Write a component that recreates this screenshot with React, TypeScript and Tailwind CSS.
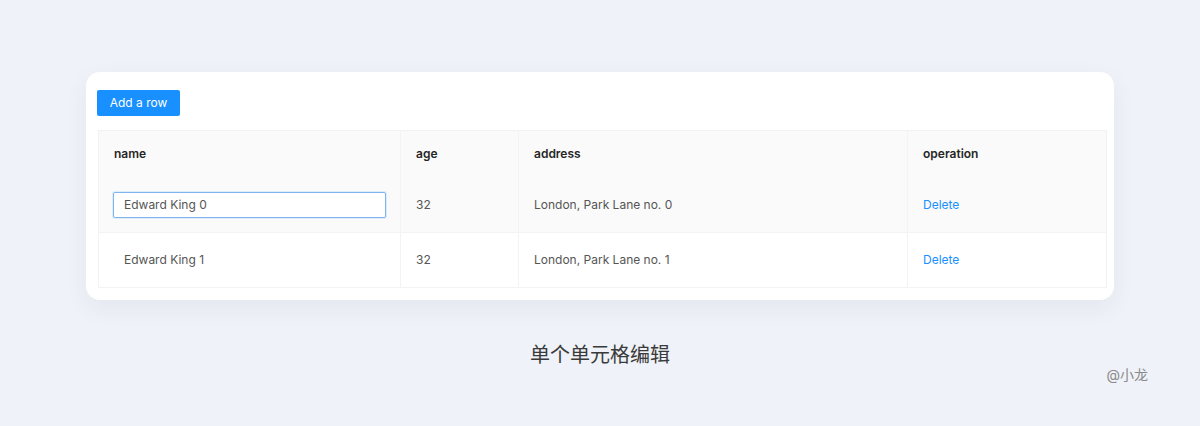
import React from 'react';

interface Row {
  key: string;
  name: string;
  age: number;
  address: string;
}

const rows: Row[] = [
  { key: '0', name: 'Edward King 0', age: 32, address: 'London, Park Lane no. 0' },
  { key: '1', name: 'Edward King 1', age: 32, address: 'London, Park Lane no. 1' },
];

export default function App() {
  return (
    <div
      className="w-[1200px] h-[426px] bg-[#eff2f8] flex flex-col items-center pt-[72px]"
      style={{ fontFamily: 'Inter, "Noto Sans CJK SC", sans-serif' }}
    >
      <div className="w-[1028px] h-[228px] bg-white rounded-[14px] shadow-[0_8px_24px_rgba(30,45,80,0.06)] pt-[17px] px-[11px]">
        <button className="h-[26px] w-[83px] bg-[#1890ff] text-white text-[12px] rounded-[2px]">
          Add a row
        </button>
        <table className="mt-[14px] ml-px w-[1008px] border-collapse border border-[#f2f2f2] text-[12px] table-fixed">
          <colgroup>
            <col className="w-[302px]" />
            <col className="w-[118px]" />
            <col className="w-[389px]" />
            <col className="w-[199px]" />
          </colgroup>
          <thead>
            <tr className="bg-[#fafafa] h-[47px] text-[#262626] text-left">
              <th className="px-[15px] font-semibold border-r border-[#f3f3f3]">name</th>
              <th className="px-[15px] font-semibold border-r border-[#f3f3f3]">age</th>
              <th className="px-[15px] font-semibold border-r border-[#f3f3f3]">address</th>
              <th className="px-[15px] font-semibold">operation</th>
            </tr>
          </thead>
          <tbody className="text-[#555]">
            {rows.map((row, i) => (
              <tr
                key={row.key}
                className={`h-[55px] border-b border-[#f3f3f3] ${i === 0 ? 'bg-[#fafafa]' : 'bg-white'}`}
              >
                <td className="px-[14px] border-r border-[#f3f3f3]">
                  {i === 0 ? (
                    <div className="h-[26px] w-[273px] border border-[#7fb5ee] rounded-[2px] shadow-[0_0_0_1px_rgba(24,144,255,0.12)] bg-white flex items-center px-[10px]">
                      {row.name}
                    </div>
                  ) : (
                    <div className="px-[11px]">{row.name}</div>
                  )}
                </td>
                <td className="px-[15px] border-r border-[#f3f3f3]">{row.age}</td>
                <td className="px-[15px] border-r border-[#f3f3f3]">{row.address}</td>
                <td className="px-[15px]">
                  <span className="text-[#1890ff]">Delete</span>
                </td>
              </tr>
            ))}
          </tbody>
        </table>
      </div>
      <div className="w-full flex justify-center mt-[42px] text-[20px] text-[#3a3a3a] leading-[26px]">
        单个单元格编辑
      </div>
      <div className="w-full flex justify-end pr-[52px] -mt-[4px] text-[14px] text-[#8a8a8a]">
        @小龙
      </div>
    </div>
  );
}
